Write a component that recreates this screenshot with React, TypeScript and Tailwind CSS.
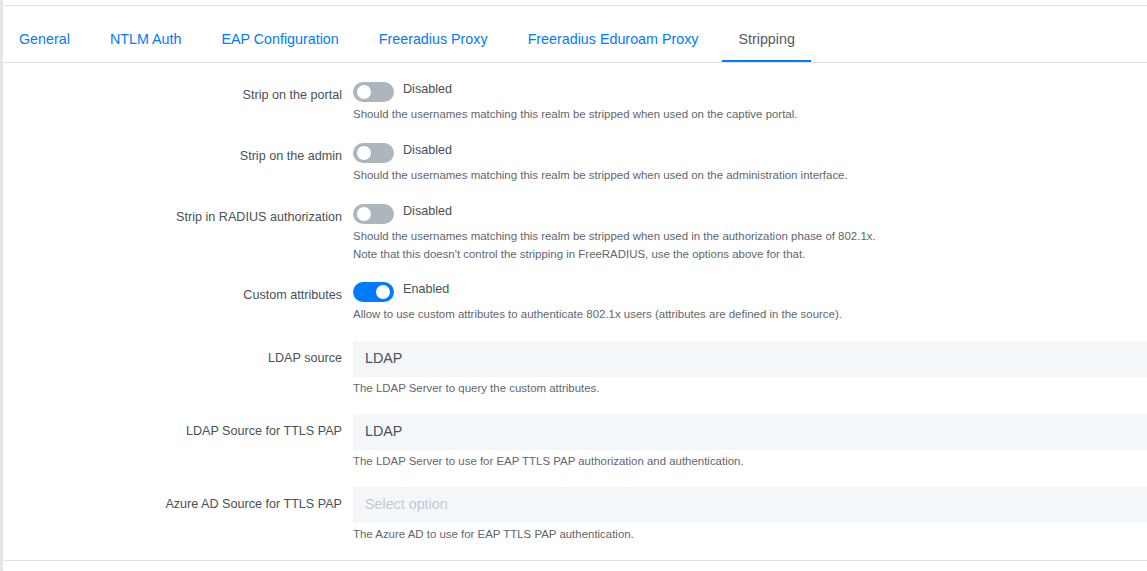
import React from "react";

const font = { fontFamily: '"Liberation Sans", Arial, sans-serif' };

function Toggle({ on }: { on: boolean }) {
  return (
    <div
      className={
        "relative h-[20px] w-[41px] shrink-0 rounded-full " +
        (on ? "bg-[#007bff]" : "bg-[#adb5bd]")
      }
    >
      <div
        className={
          "absolute top-[3px] h-[14px] w-[14px] rounded-full bg-white " +
          (on ? "right-[4px]" : "left-[4px]")
        }
      />
    </div>
  );
}

function SwitchRow({
  label,
  on,
  help,
  className,
}: {
  label: string;
  on: boolean;
  help: string[];
  className?: string;
}) {
  return (
    <div className={"flex " + (className ?? "")}>
      <div className="w-[339px] shrink-0 pt-[8px] text-right text-[12.6px] leading-[18px] text-[#495057]">
        {label}
      </div>
      <div className="ml-[11px] flex flex-col">
        <div className="flex items-start">
          <div className="mt-[4px]">
            <Toggle on={on} />
          </div>
          <div className="ml-[9px] mt-[2px] text-[12.6px] leading-[18px] text-[#495057]">
            {on ? "Enabled" : "Disabled"}
          </div>
        </div>
        <div className="mt-[3px] text-[11.45px] leading-[18px] text-[#5f666d]">
          {help.map((h) => (
            <div key={h}>{h}</div>
          ))}
        </div>
      </div>
    </div>
  );
}

function SelectRow({
  label,
  value,
  help,
  className,
}: {
  label: string;
  value?: string;
  help: string;
  className?: string;
}) {
  return (
    <div className={"flex " + (className ?? "")}>
      <div className="w-[339px] shrink-0 pt-[8px] text-right text-[12.6px] leading-[18px] text-[#495057]">
        {label}
      </div>
      <div className="ml-[11px] flex flex-1 flex-col">
        <div className="flex h-[36px] items-center bg-[#f4f7fa] px-[12px] text-[14.3px] text-[#495057]">
          {value ? value : <span className="text-[#c3c8cd]">Select option</span>}
        </div>
        <div className="mt-[2px] text-[11.45px] leading-[18px] text-[#5f666d]">{help}</div>
      </div>
    </div>
  );
}

export default function App() {
  const tabs = [
    "General",
    "NTLM Auth",
    "EAP Configuration",
    "Freeradius Proxy",
    "Freeradius Eduroam Proxy",
    "Stripping",
  ];
  return (
    <div style={font} className="h-[571px] w-full overflow-hidden bg-white">
      <div className="flex h-full border-l-[3px] border-[#e3e6ea]">
        <div className="flex flex-1 flex-col">
          <div className="mt-[5px] border-t border-[#dee2e6]" />
          <div className="flex h-[57px] gap-[8px] border-b border-[#dee2e6]">
            {tabs.map((t) => {
              const active = t === "Stripping";
              return (
                <div
                  key={t}
                  className={
                    "flex h-[56px] items-center border-b-[2px] px-[16px] pt-[14px] text-[14.3px] " +
                    (active
                      ? "border-[#007bff] text-[#545b62]"
                      : "border-transparent text-[#007bff]")
                  }
                >
                  {t}
                </div>
              );
            })}
          </div>
          <div className="flex flex-col">
            <SwitchRow
              className="mt-[15px]"
              label="Strip on the portal"
              on={false}
              help={[
                "Should the usernames matching this realm be stripped when used on the captive portal.",
              ]}
            />
            <SwitchRow
              className="mt-[16px]"
              label="Strip on the admin"
              on={false}
              help={[
                "Should the usernames matching this realm be stripped when used on the administration interface.",
              ]}
            />
            <SwitchRow
              className="mt-[16px]"
              label="Strip in RADIUS authorization"
              on={false}
              help={[
                "Should the usernames matching this realm be stripped when used in the authorization phase of 802.1x.",
                "Note that this doesn't control the stripping in FreeRADIUS, use the options above for that.",
              ]}
            />
            <SwitchRow
              className="mt-[15px]"
              label="Custom attributes"
              on={true}
              help={[
                "Allow to use custom attributes to authenticate 802.1x users (attributes are defined in the source).",
              ]}
            />
            <SelectRow
              className="mt-[18px]"
              label="LDAP source"
              value="LDAP"
              help="The LDAP Server to query the custom attributes."
            />
            <SelectRow
              className="mt-[17px]"
              label="LDAP Source for TTLS PAP"
              value="LDAP"
              help="The LDAP Server to use for EAP TTLS PAP authorization and authentication."
            />
            <SelectRow
              className="mt-[17px]"
              label="Azure AD Source for TTLS PAP"
              help="The Azure AD to use for EAP TTLS PAP authentication."
            />
          </div>
          <div className="mt-[17px] border-t border-[#dee2e6]" />
        </div>
      </div>
    </div>
  );
}
